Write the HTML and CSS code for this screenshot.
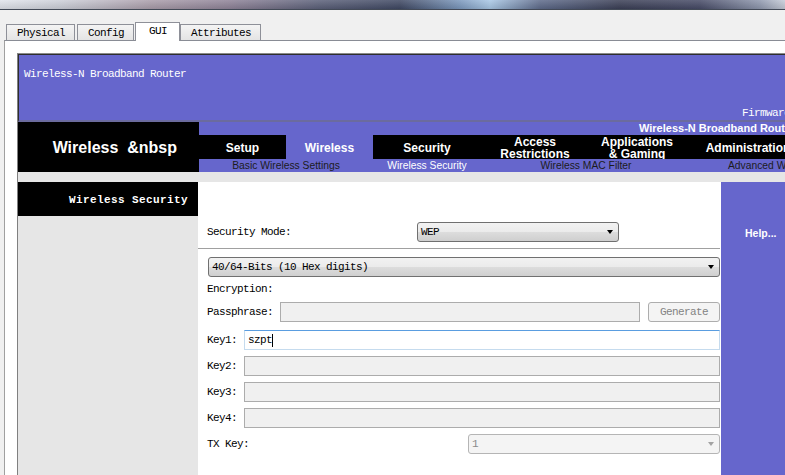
FILE: index.html
```html
<!DOCTYPE html>
<html>
<head>
<meta charset="utf-8">
<title>Router GUI</title>
<link rel="stylesheet" href="styles.css">
</head>
<body>
<div class="titlebar"></div>
<div class="tabstrip">
  <div class="tab">Physical</div>
  <div class="tab">Config</div>
  <div class="tab tab-active">GUI</div>
  <div class="tab">Attributes</div>
</div>
<div class="panel">
  <div class="view">
    <div class="header">
      <div class="brand">Wireless-N Broadband Router</div>
      <div class="firmware">Firmware Version: v1.0.00</div>
    </div>
    <div class="nav">
      <div class="nav-title">Wireless&nbsp; &amp;nbsp</div>
      <div class="nav-right">
        <div class="model">Wireless-N Broadband Router</div>
        <div class="menu">
          <div class="menu-item m-setup">Setup</div>
          <div class="menu-item m-wireless menu-current">Wireless</div>
          <div class="menu-item m-security">Security</div>
          <div class="menu-item m-access">Access<br>Restrictions</div>
          <div class="menu-item m-apps">Applications<br>&amp; Gaming</div>
          <div class="menu-item m-admin">Administration</div>
        </div>
        <div class="submenu">
          <div class="sub s-basic">Basic Wireless Settings</div>
          <div class="sub s-sec sub-current">Wireless Security</div>
          <div class="sub s-mac">Wireless MAC Filter</div>
          <div class="sub s-adv">Advanced Wireless Settings</div>
        </div>
      </div>
    </div>
    <div class="gap"></div>
    <div class="main">
      <div class="sidebar">
        <div class="side-title">Wireless Security</div>
      </div>
      <div class="content">
        <div class="row-mode">
          <div class="mode-label">Security Mode:</div>
          <div class="sel sel-mode"><span>WEP</span><span class="arrow"></span></div>
        </div>
        <div class="rule"></div>
        <div class="sel sel-wide"><span>40/64-Bits (10 Hex digits)</span><span class="arrow"></span></div>
        <div class="enc">Encryption:</div>
        <div class="row row-pass">
          <div class="lbl">Passphrase:</div>
          <div class="field"></div>
          <div class="btn">Generate</div>
        </div>
        <div class="row row-key1">
          <div class="lbl">Key1:</div>
          <div class="field field-active"><span>szpt</span><span class="caret"></span></div>
        </div>
        <div class="row">
          <div class="lbl">Key2:</div>
          <div class="field"></div>
        </div>
        <div class="row">
          <div class="lbl">Key3:</div>
          <div class="field"></div>
        </div>
        <div class="row">
          <div class="lbl">Key4:</div>
          <div class="field"></div>
        </div>
        <div class="row">
          <div class="lbl">TX Key:</div>
          <div class="sel sel-tx"><span>1</span><span class="arrow arrow-dis"></span></div>
        </div>
      </div>
      <div class="help">Help...</div>
    </div>
  </div>
</div>
</body>
</html>
```

FILE: styles.css
```css
html, body {
  margin: 0;
  padding: 0;
  width: 785px;
  height: 475px;
  overflow: hidden;
}

body {
  background: #f0f0f0;
  font-family: "Liberation Mono", "DejaVu Sans Mono", monospace;
  font-size: 11px;
  letter-spacing: -0.6px;
  color: #000;
}

.titlebar {
  height: 9px;
  border-bottom: 1px solid #434a57;
  background:
    linear-gradient(rgba(255,255,255,0.15), rgba(0,0,0,0.1)),
    linear-gradient(90deg, #e2e5ec 0, #cdd0d9 60px, #ab9eab 150px, #8f8398 230px,
      #5b6079 320px, #3f4863 400px, #7b98bd 460px, #a9c8e6 490px, #5e6b8b 540px,
      #3b3f56 620px, #474b67 700px, #8f98ae 760px, #c6ccd8 785px);
}

.tabstrip {
  height: 30px;
  display: flex;
  align-items: flex-end;
  padding-left: 6px;
}

.tab {
  height: 15px;
  line-height: 16px;
  padding: 0 9px 0 10px;
  border: 1px solid #8e9098;
  border-bottom: none;
  background: linear-gradient(#f4f4f4, #e4e4e4);
  margin-right: 2px;
  white-space: nowrap;
}

.tab-active {
  position: relative;
  z-index: 2;
  height: 18px;
  line-height: 16px;
  padding: 0 12px 0 13px;
  margin-left: -1px;
  margin-right: 0;
  margin-bottom: -1px;
  background: #fff;
}

.panel {
  margin-left: 4px;
  border-top: 1px solid #898c95;
  border-left: 1px solid #a0a0a0;
  background: #fff;
  padding: 12px 0 0 12px;
  height: 500px;
}

.view {
  width: 900px;
  border-top: 1px solid #8a8a8a;
  border-left: 1px solid #808080;
  background: #e6e6e6;
}

.header {
  height: 53px;
  padding: 12px 0 0 5px;
  background: #6666cc;
  border-top: 1px solid #2e2e2e;
  border-left: 1px solid #2e2e2e;
  border-bottom: 2px solid #6b6b9e;
  color: #fff;
  display: flex;
  flex-direction: column;
  justify-content: space-between;
  white-space: nowrap;
}

.brand, .firmware {
  line-height: 14px;
}

.firmware {
  padding-left: 718px;
}

.nav {
  height: 50px;
  display: flex;
}

.nav-title {
  width: 181px;
  box-sizing: border-box;
  background: #000;
  color: #fff;
  font-family: "Liberation Sans", Arial, sans-serif;
  font-weight: bold;
  font-size: 16px;
  letter-spacing: 0;
  display: flex;
  align-items: center;
  justify-content: flex-end;
  padding: 2px 22px 0 0;
  white-space: nowrap;
}

.nav-right {
  flex: 1;
  display: flex;
  flex-direction: column;
  font-family: "Liberation Sans", Arial, sans-serif;
  letter-spacing: 0;
}

.model {
  height: 13px;
  line-height: 13px;
  background: #6666cc;
  color: #fff;
  font-weight: bold;
  font-size: 11px;
  padding-left: 440px;
  white-space: nowrap;
}

.menu {
  height: 24px;
  background: #000;
  display: flex;
}

.menu-item {
  color: #fff;
  font-weight: bold;
  font-size: 12px;
  line-height: 12px;
  display: flex;
  align-items: center;
  justify-content: center;
  text-align: center;
  white-space: nowrap;
  flex: none;
  padding-top: 1px;
  box-sizing: border-box;
}

.menu-current {
  background: #6666cc;
}

.m-setup { width: 87px; }
.m-wireless { width: 87px; }
.m-security { width: 108px; }
.m-access { width: 108px; }
.m-apps { width: 96px; }
.m-admin { width: 126px; }

.submenu {
  height: 13px;
  line-height: 13px;
  background: #6666cc;
  display: flex;
  font-size: 10.3px;
  color: #1c1c1c;
  white-space: nowrap;
}

.sub {
  text-align: center;
  flex: none;
}

.sub-current {
  color: #fff;
}

.s-basic { width: 174px; }
.s-sec { width: 108px; }
.s-mac { width: 210px; }
.s-adv { text-align: left; padding-left: 37px; }

.gap {
  height: 10px;
  background: #e6e6e6;
}

.main {
  display: flex;
  height: 300px;
}

.sidebar {
  width: 180px;
  flex: none;
  background: #e6e6e6;
}

.side-title {
  height: 34px;
  line-height: 36px;
  background: #000;
  color: #fff;
  font-weight: bold;
  letter-spacing: 0.4px;
  text-align: right;
  padding-right: 10px;
  white-space: nowrap;
}

.content {
  width: 522px;
  flex: none;
  padding: 40px 1px 0 0;
  background: #fff;
}

.row-mode {
  display: flex;
  align-items: center;
  height: 20px;
  padding-left: 9px;
}

.mode-label {
  width: 210px;
  flex: none;
}

.sel {
  height: 20px;
  box-sizing: border-box;
  border: 1px solid #707070;
  border-radius: 3px;
  background: linear-gradient(#f2f2f2 0, #ebebeb 50%, #dddddd 50%, #cfcfcf 100%);
  padding-left: 3px;
  display: flex;
  align-items: center;
  justify-content: space-between;
  white-space: nowrap;
}

.sel-mode {
  width: 202px;
}

.sel-wide {
  width: 512px;
  margin: 8px 0 0 10px;
}

.sel-tx {
  width: 252px;
  margin-left: auto;
  border-color: #b5b5b5;
  background: #f4f4f4;
  color: #8a8a8a;
}

.arrow {
  width: 0;
  height: 0;
  border-left: 3.5px solid transparent;
  border-right: 3.5px solid transparent;
  border-top: 4px solid #000;
  margin-right: 5px;
}

.arrow-dis {
  border-top-color: #a3a3a3;
}

.rule {
  height: 1px;
  background: #a0a0a0;
  margin-top: 6px;
}

.enc {
  margin-top: 5px;
  padding-left: 9px;
  line-height: 14px;
}

.row {
  display: flex;
  align-items: center;
  gap: 7px;
  height: 20px;
  padding-left: 9px;
  margin-top: 6px;
}

.row-key1 {
  margin-top: 8px;
}

.lbl {
  flex: none;
  white-space: nowrap;
}

.field {
  flex: 1;
  height: 20px;
  box-sizing: border-box;
  border: 1px solid #acacac;
  background: #f0f0f0;
}

.field-active {
  background: #fff;
  border-color: #c5dbee;
  border-top-color: #5a9de0;
  padding-left: 3px;
  display: flex;
  align-items: center;
}

.caret {
  width: 0;
  height: 13px;
  border-left: 1px solid #000;
}

.btn {
  flex: none;
  width: 72px;
  height: 20px;
  box-sizing: border-box;
  margin-left: 1px;
  border: 1px solid #adadad;
  border-radius: 3px;
  background: #f4f4f4;
  color: #838383;
  display: flex;
  align-items: center;
  justify-content: center;
}

.help {
  flex: 1;
  background: #6666cc;
  color: #fff;
  font-family: "Liberation Sans", Arial, sans-serif;
  font-weight: bold;
  font-size: 10.5px;
  letter-spacing: 0;
  padding: 44px 0 0 24px;
  line-height: 14px;
}
```
